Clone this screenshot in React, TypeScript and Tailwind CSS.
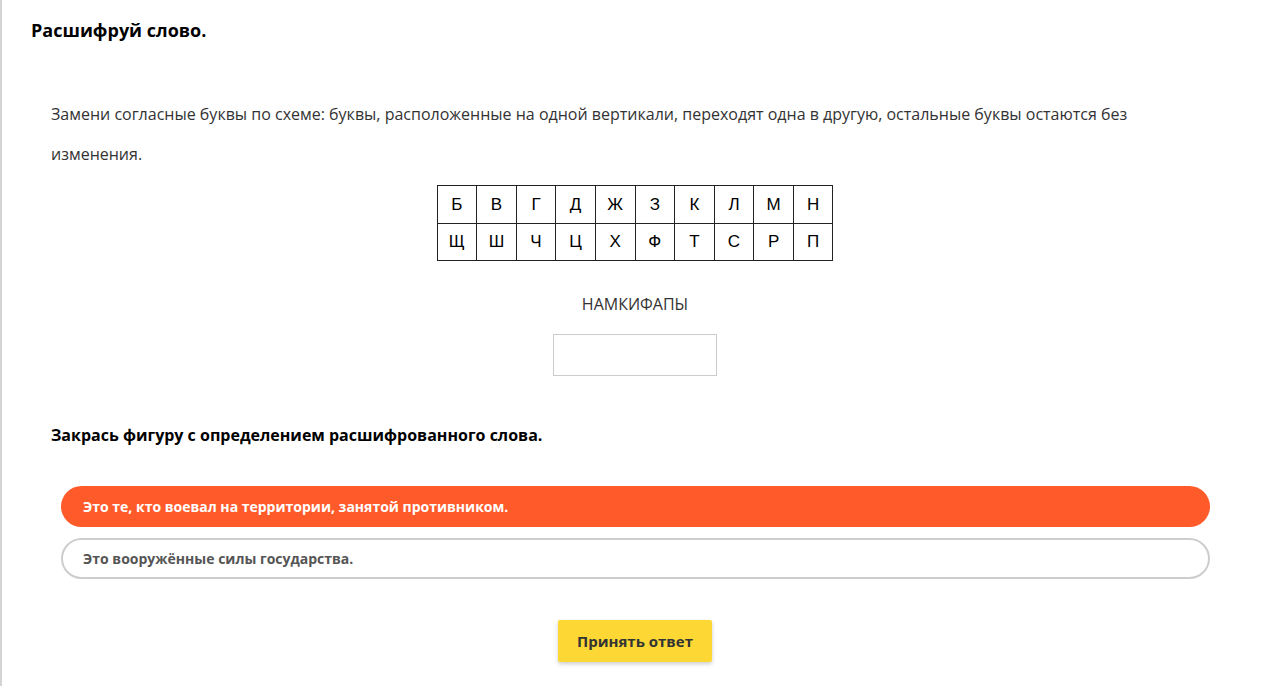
const top = ["Б", "В", "Г", "Д", "Ж", "З", "К", "Л", "М", "Н"];
const bottom = ["Щ", "Ш", "Ч", "Ц", "Х", "Ф", "Т", "С", "Р", "П"];

export default function App() {
  return (
    <div
      className="min-h-[686px] border-l-2 border-[#d4d4d4] bg-white pr-[9px] pb-6 text-[#222]"
      style={{ fontFamily: '"Open Sans", "Noto Sans", sans-serif' }}
    >
      <h1 className="pl-[29px] pt-[18px] text-[18px] font-bold leading-6 text-black">Расшифруй слово.</h1>

      <div className="pl-[49px] pr-[111px] pt-[52px]">
        <p className="text-[16px] leading-[40px] text-[#333]">
          Замени согласные буквы по схеме: буквы, расположенные на одной вертикали, переходят одна в другую, остальные буквы остаются без изменения.
        </p>
      </div>

      <div className="mt-[11px] flex justify-center">
        <table className="border-collapse text-[17px] text-black" style={{ fontFamily: '"Liberation Sans", Arial, sans-serif' }}>
          <tbody>
            {[top, bottom].map((row, i) => (
              <tr key={i}>
                {row.map((ch) => (
                  <td key={ch} className="h-[37.5px] w-[39.6px] border border-[#222] text-center align-middle">
                    {ch}
                  </td>
                ))}
              </tr>
            ))}
          </tbody>
        </table>
      </div>

      <div className="mt-[31px] text-center text-[16px] leading-6 text-[#333]">НАМКИФАПЫ</div>

      <div className="mt-[18px] flex justify-center">
        <input className="h-[42px] w-[164px] border border-[#ccc] outline-none" />
      </div>

      <h2 className="pl-[49px] pt-[47px] text-[16px] font-bold leading-6 text-black">
        Закрась фигуру с определением расшифрованного слова.
      </h2>

      <div className="ml-[59px] mr-[58px] mt-[39px] flex flex-col gap-[11px]">
        <div className="flex h-[41px] items-center rounded-full bg-[#ff5a2a] px-[22px] text-[14px] font-bold text-white">
          Это те, кто воевал на территории, занятой противником.
        </div>
        <div className="flex h-[41px] items-center rounded-full border-2 border-[#cdcdcd] px-[20px] text-[14px] font-bold text-[#555]">
          Это вооружённые силы государства.
        </div>
      </div>

      <div className="mt-[41px] flex justify-center">
        <button className="h-[42px] w-[154px] rounded-[2px] bg-[#fdd835] text-[15px] font-bold text-[#333] shadow-[0_2px_4px_rgba(0,0,0,0.2)]">
          Принять ответ
        </button>
      </div>
    </div>
  );
}
